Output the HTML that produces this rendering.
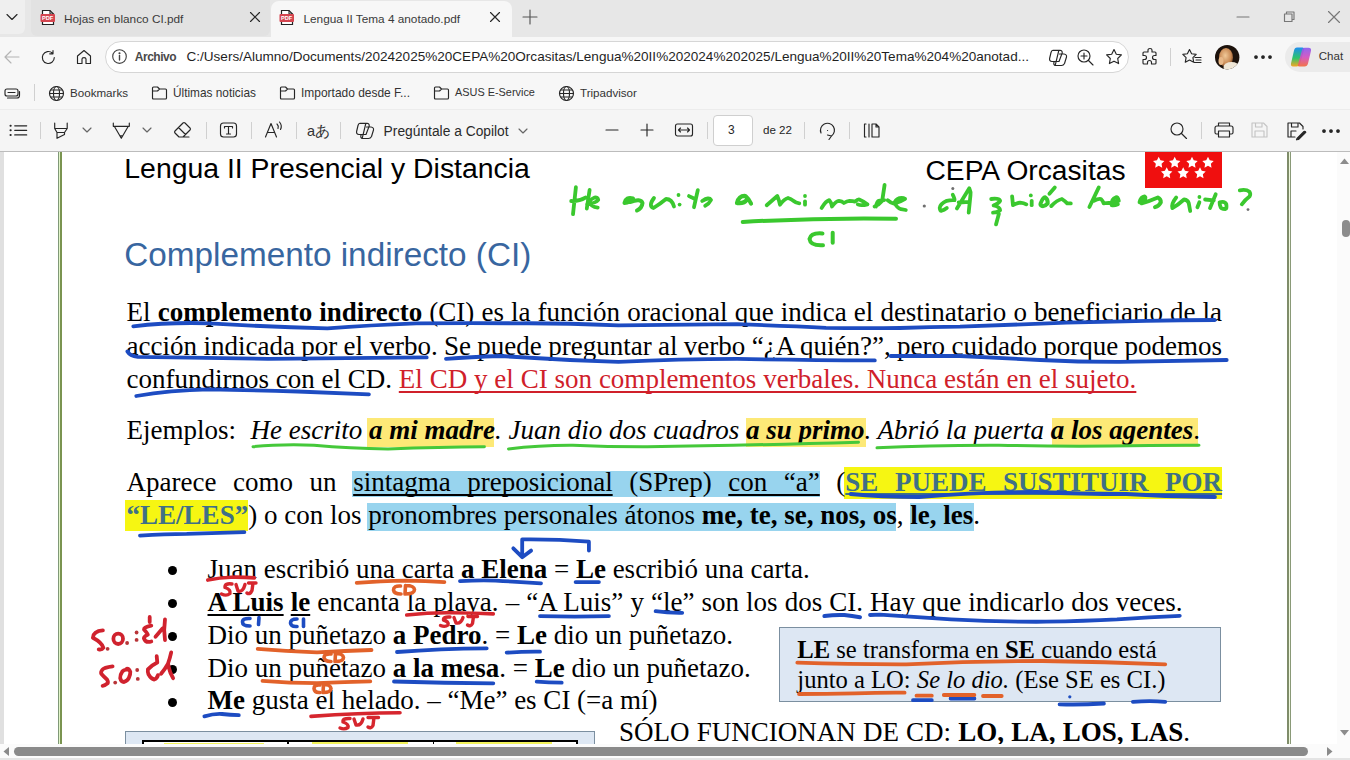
<!DOCTYPE html>
<html><head><meta charset="utf-8">
<style>
*{margin:0;padding:0;box-sizing:border-box}
html,body{width:1350px;height:760px;overflow:hidden;background:#f7f7f7;font-family:"Liberation Sans",sans-serif;position:relative}
.a{position:absolute}
.ui{font-family:"Liberation Sans",sans-serif;color:#1f1f1f;white-space:pre}
.ic{position:absolute;overflow:visible}
.ic *{fill:none;stroke:#262626;stroke-width:1.15;stroke-linecap:round;stroke-linejoin:round}
.sep{position:absolute;width:1px;background:#d0d0d0}
u{text-decoration-skip-ink:none}
.doc{font-family:"Liberation Serif",serif;color:#000;white-space:pre;font-size:27px;line-height:33px}
.j{white-space:normal;text-align:justify;text-align-last:justify}
.cs{font-family:"Liberation Sans",sans-serif;white-space:pre}
</style></head><body>
<!-- TAB STRIP -->
<div class="a" style="left:0;top:0;width:1350px;height:37px;background:#e7e7e7"></div>
<div class="a" style="left:0;top:0;width:25px;height:34px;background:#efefef;border-radius:0 0 6px 0"></div>
<svg class="ic" style="left:4px;top:10px" width="16" height="14"><path d="M3 4.5 L8 9.5 L13 4.5"/></svg>
<div class="a" style="left:31px;top:0;width:239px;height:36px;background:#e2e2e2;border-radius:0 0 6px 6px"></div>
<svg class="a" style="left:40px;top:9px" width="16" height="17" viewBox="0 0 16 17"><path d="M2.5 1.5 H10 L13.5 5 V15.5 H2.5 Z" fill="#fff" stroke="#222" stroke-width="1.2"/><path d="M10 1.5 V5 H13.5" fill="none" stroke="#222" stroke-width="1.1"/><rect x="0.5" y="5" width="14.5" height="8" rx="1" fill="#d4454f"/><text x="7.7" y="11.2" font-size="5.6" font-family="Liberation Sans" font-weight="bold" fill="#fff" text-anchor="middle">PDF</text></svg>
<div class="a ui" style="left:64px;top:11.5px;font-size:11.8px;color:#3a3a3a">Hojas en blanco CI.pdf</div>
<svg class="ic" style="left:248px;top:10px" width="14" height="14"><path d="M2.5 2.5 L11.5 11.5 M11.5 2.5 L2.5 11.5"/></svg>
<div class="a" style="left:271px;top:1px;width:241px;height:36px;background:#f7f7f7;border-radius:8px 8px 0 0"></div>
<svg class="a" style="left:279px;top:9px" width="16" height="17" viewBox="0 0 16 17"><path d="M2.5 1.5 H10 L13.5 5 V15.5 H2.5 Z" fill="#fff" stroke="#222" stroke-width="1.2"/><path d="M10 1.5 V5 H13.5" fill="none" stroke="#222" stroke-width="1.1"/><rect x="0.5" y="5" width="14.5" height="8" rx="1" fill="#d4454f"/><text x="7.7" y="11.2" font-size="5.6" font-family="Liberation Sans" font-weight="bold" fill="#fff" text-anchor="middle">PDF</text></svg>
<div class="a ui" style="left:303.5px;top:11.5px;font-size:11.8px;color:#3a3a3a">Lengua II Tema 4 anotado.pdf</div>
<svg class="ic" style="left:488px;top:10px" width="14" height="14"><path d="M2.5 2.5 L11.5 11.5 M11.5 2.5 L2.5 11.5"/></svg>
<svg class="ic" style="left:521px;top:8px" width="18" height="18"><path d="M9 2 V16 M2 9 H16" style="stroke:#555"/></svg>
<svg class="ic" style="left:1236px;top:10px" width="14" height="14"><path d="M1 7 H13" style="stroke:#777"/></svg>
<svg class="ic" style="left:1282px;top:10px" width="14" height="14"><path d="M2.5 4 H10 V11.5 H2.5 Z M4.5 4 V2 H12 V9.5 H10" style="stroke:#777"/></svg>
<svg class="ic" style="left:1327px;top:10px" width="14" height="14"><path d="M1.5 1.5 L12.5 12.5 M12.5 1.5 L1.5 12.5" style="stroke:#777"/></svg>

<!-- ADDRESS ROW -->
<div class="a" style="left:0;top:37px;width:1350px;height:41px;background:#f7f7f7"></div>
<svg class="ic" style="left:3px;top:49px" width="18" height="16"><path d="M2 8 H16 M2 8 L8 2 M2 8 L8 14" style="stroke:#b4b4b4"/></svg>
<svg class="ic" style="left:40px;top:49px" width="17" height="17"><path d="M14.3 8.5 A6 6 0 1 1 12.3 4 M13 1.5 V4.8 H9.7"/></svg>
<svg class="ic" style="left:75px;top:48px" width="18" height="18"><path d="M2.5 8 L9 2.5 L15.5 8 V15.5 H11 V11 Q11 9.6 9 9.6 Q7 9.6 7 11 V15.5 H2.5 Z"/></svg>
<div class="a" style="left:104.5px;top:40.8px;width:1024.5px;height:31.8px;background:#fff;border:1px solid #d6d6d6;border-radius:16px"></div>
<svg class="ic" style="left:111px;top:48.3px" width="17" height="17"><circle cx="8.5" cy="8.5" r="6.8" style="stroke:#444"/><path d="M8.5 7.5 V12" style="stroke:#444;stroke-width:1.4"/><circle cx="8.5" cy="5.2" r="0.5" style="fill:#444;stroke:#444"/></svg>
<div class="a ui" style="left:134.8px;top:50px;font-size:12px;font-weight:bold;letter-spacing:-0.5px;color:#4a4a4a">Archivo</div>
<div class="a ui" style="left:186.5px;top:48.5px;font-size:13.56px;color:#1f1f1f">C:/Users/Alumno/Documents/20242025%20CEPA%20Orcasitas/Lengua%20II%202024%202025/Lengua%20II%20Tema%204%20anotad...</div>
<svg class="ic" style="left:1048px;top:47px" width="21" height="20"><path d="M5 3.3 L12 3.3 Q14.5 3.5 14.2 6 L11 14.5 L4 14.5 Q1.2 14.3 1.6 11.5 L3 5.5 Q3.5 3.5 5 3.3 Z M11.5 7 L16 7 Q19 7.5 18.5 10 L16.5 16.5 Q15.5 18.5 13.5 18.5 L8 18.5 Q5.5 18.3 5.8 16 L6.2 14.5 M10.8 3.5 L7.2 18.3"/></svg>
<svg class="ic" style="left:1076px;top:48px" width="19" height="19"><circle cx="8" cy="8" r="6"/><path d="M12.5 12.5 L17 17 M8 5 V11 M5 8 H11"/></svg>
<svg class="ic" style="left:1104px;top:47px" width="20" height="20"><path d="M10 2.5 L12.3 7.2 L17.4 7.9 L13.7 11.5 L14.6 16.6 L10 14.2 L5.4 16.6 L6.3 11.5 L2.6 7.9 L7.7 7.2 Z"/></svg>
<svg class="ic" style="left:1140px;top:47px" width="20" height="20"><path d="M8 3 Q8 1.5 10 1.5 Q12 1.5 12 3 V5 H15 Q16 5 16 6 V8.5 H14.5 Q12.5 8.5 12.5 10.5 Q12.5 12.5 14.5 12.5 H16 V16 Q16 17 15 17 H11.5 V15.5 Q11.5 13.5 9.5 13.5 Q7.5 13.5 7.5 15.5 V17 H4 Q3 17 3 16 V12.5 H4.5 Q6.5 12.5 6.5 10.5 Q6.5 8.5 4.5 8.5 H3 V6 Q3 5 4 5 H8 Z"/></svg>
<div class="sep" style="left:1170px;top:48px;height:18px"></div>
<svg class="ic" style="left:1181px;top:47px" width="22" height="20"><path d="M8.5 2.5 L10.6 6.8 L15.2 7.4 L11.9 10.6 L12.7 15.2 L8.5 13 L4.3 15.2 L5.1 10.6 L1.8 7.4 L6.4 6.8 Z M14 10.5 H20 M15 13 H20 M13.5 15.5 H20" /></svg>
<svg class="a" style="left:1215px;top:44.5px" width="25" height="25" viewBox="0 0 25 25"><defs><clipPath id="avc"><circle cx="12.2" cy="12.2" r="12.2"/></clipPath><radialGradient id="avf" cx="0.45" cy="0.4" r="0.6"><stop offset="0" stop-color="#f0c898"/><stop offset="0.7" stop-color="#c98a55"/><stop offset="1" stop-color="#7a4a28"/></radialGradient></defs><g clip-path="url(#avc)"><rect width="25" height="25" fill="#1c120c"/><ellipse cx="11" cy="12.5" rx="7" ry="9.5" fill="url(#avf)"/><ellipse cx="16.5" cy="22" rx="8" ry="5" fill="#efe6d6"/><ellipse cx="6" cy="16" rx="2.5" ry="4" fill="#e8b888"/></g></svg>
<svg class="ic" style="left:1253px;top:50px" width="20" height="14"><circle cx="3" cy="7" r="1.3" style="fill:#262626"/><circle cx="10" cy="7" r="1.3" style="fill:#262626"/><circle cx="17" cy="7" r="1.3" style="fill:#262626"/></svg>
<div class="a" style="left:1285px;top:42px;width:80px;height:30px;background:#ebebeb;border-radius:15px"></div>
<svg class="a" style="left:1289px;top:46px" width="24" height="22" viewBox="0 0 24 22"><defs><linearGradient id="cg1" x1="0" y1="0" x2="0" y2="1"><stop offset="0" stop-color="#1e8ef0"/><stop offset="0.55" stop-color="#2fc46a"/><stop offset="1" stop-color="#f5a623"/></linearGradient><linearGradient id="cg2" x1="0" y1="0" x2="0" y2="1"><stop offset="0" stop-color="#8a5cf0"/><stop offset="0.5" stop-color="#d24fc0"/><stop offset="1" stop-color="#f46a3a"/></linearGradient></defs><path d="M8 1.5 H13.5 Q15.5 1.5 15 4 L11 18 Q10.3 20.5 7.5 20.5 H4 Q1.5 20.5 2 17.5 L5 4.5 Q5.6 1.5 8 1.5 Z" fill="url(#cg1)"/><path d="M15.5 1.8 H19.5 Q22.5 1.8 22 4.8 L19 17.5 Q18.3 20.5 15.5 20.5 H10 Q8.5 20.5 9 18.5 L13 4 Q13.5 1.8 15.5 1.8 Z" fill="url(#cg2)" opacity="0.92"/></svg>
<div class="a ui" style="left:1318.8px;top:50px;font-size:11.5px;color:#333">Chat</div>

<!-- BOOKMARK ROW -->
<div class="a" style="left:0;top:78px;width:1350px;height:31px;background:#f7f7f7"></div>
<svg class="ic" style="left:3px;top:85px" width="18" height="16"><rect x="2" y="4" width="13" height="7" rx="2"/><path d="M4.5 13 H14 Q16.5 13 16.5 10.5 V6.5 M5 7.5 H12"/></svg>
<div class="sep" style="left:34px;top:84px;height:17px"></div>
<svg class="ic" style="left:48px;top:85px" width="17" height="17"><circle cx="8.5" cy="8.5" r="7"/><ellipse cx="8.5" cy="8.5" rx="3" ry="7"/><path d="M1.5 8.5 H15.5 M2.8 5 H14.2 M2.8 12 H14.2"/></svg>
<div class="a ui" style="left:70px;top:86px;font-size:11.6px;color:#333">Bookmarks</div>
<svg class="ic" style="left:151px;top:85px" width="17" height="16"><path d="M1.5 3 Q1.5 2 2.5 2 H6.5 L8.5 4 H14.5 Q15.5 4 15.5 5 V13 Q15.5 14 14.5 14 H2.5 Q1.5 14 1.5 13 Z M1.5 6 H6.5 L8.5 4"/></svg>
<div class="a ui" style="left:173px;top:86px;font-size:11.85px;color:#333">Últimas noticias</div>
<svg class="ic" style="left:279px;top:85px" width="17" height="16"><path d="M1.5 3 Q1.5 2 2.5 2 H6.5 L8.5 4 H14.5 Q15.5 4 15.5 5 V13 Q15.5 14 14.5 14 H2.5 Q1.5 14 1.5 13 Z M1.5 6 H6.5 L8.5 4"/></svg>
<div class="a ui" style="left:301px;top:86px;font-size:11.96px;color:#333">Importado desde F...</div>
<svg class="ic" style="left:433px;top:85px" width="17" height="16"><path d="M1.5 3 Q1.5 2 2.5 2 H6.5 L8.5 4 H14.5 Q15.5 4 15.5 5 V13 Q15.5 14 14.5 14 H2.5 Q1.5 14 1.5 13 Z M1.5 6 H6.5 L8.5 4"/></svg>
<div class="a ui" style="left:455px;top:86px;font-size:10.9px;color:#333">ASUS E-Service</div>
<svg class="ic" style="left:558px;top:85px" width="17" height="17"><circle cx="8.5" cy="8.5" r="7"/><ellipse cx="8.5" cy="8.5" rx="3" ry="7"/><path d="M1.5 8.5 H15.5 M2.8 5 H14.2 M2.8 12 H14.2"/></svg>
<div class="a ui" style="left:580px;top:86px;font-size:11.6px;color:#333">Tripadvisor</div>

<!-- PDF TOOLBAR -->
<div class="a" style="left:0;top:109px;width:1350px;height:1px;background:#ececec"></div>
<div class="a" style="left:0;top:110px;width:1350px;height:41px;background:#f5f5f5"></div>
<div class="a" style="left:0;top:151px;width:1350px;height:1px;background:#bcbcbc"></div>
<svg class="ic" style="left:8px;top:121px" width="20" height="18"><path d="M2.5 4.8 H2.7 M2.5 9.3 H2.7 M2.5 13.9 H2.7" style="stroke-width:2"/><path d="M6.7 4.8 H18.7 M6.7 9.3 H18.7 M6.7 13.9 H18.7"/></svg>
<div class="sep" style="left:40px;top:122px;height:17px"></div>
<svg class="ic" style="left:51px;top:120px" width="20" height="20"><path d="M3.7 3.1 V8.5 H16.2 V3.1 M3.7 8.5 L6 12.5 V18.3 L13.5 14.5 V12.5 L16.2 8.5 M6 12.5 H13.5"/></svg>
<svg class="ic" style="left:81px;top:125px" width="12" height="10"><path d="M2 3 L6 7 L10 3" style="stroke:#666"/></svg>
<svg class="ic" style="left:111px;top:120px" width="20" height="20"><path d="M2.3 3.1 V6.3 H18.3 V3.1 M3.3 6.3 L10.3 18.3 L17.3 6.3 M8.8 15.8 H11.8"/></svg>
<svg class="ic" style="left:141px;top:125px" width="12" height="10"><path d="M2 3 L6 7 L10 3" style="stroke:#666"/></svg>
<svg class="ic" style="left:172px;top:120px" width="22" height="20"><path d="M3 11 L11 3 Q12 2 13 3 L18 8 Q19 9 18 10 L11 17 H7 L3 13 Q2 12 3 11 Z M6.5 7.5 L13.5 14.5 M7 17 H17"/></svg>
<div class="sep" style="left:206px;top:122px;height:17px"></div>
<svg class="ic" style="left:218px;top:120px" width="21" height="20"><rect x="2.5" y="3" width="16" height="14" rx="3"/><path d="M6.5 6.5 H14.5 M6.5 6.5 V8 M14.5 6.5 V8 M10.5 6.5 V14 M8.5 14 H12.5"/></svg>
<div class="sep" style="left:251px;top:122px;height:17px"></div>
<svg class="ic" style="left:263px;top:120px" width="22" height="20"><path d="M2.5 17 L8 3.5 L13.5 17 M4.5 12.5 H11.5 M14 4 Q16 6 15 8.5 M16.5 2 Q19.5 5.5 17.5 9.5"/></svg>
<div class="sep" style="left:296px;top:122px;height:17px"></div>
<div class="a ui" style="left:307px;top:122px;font-size:14.5px;color:#333">aあ</div>
<div class="sep" style="left:340px;top:122px;height:17px"></div>
<svg class="ic" style="left:355px;top:120px" width="21" height="20"><path d="M5 3.3 L12 3.3 Q14.5 3.5 14.2 6 L11 14.5 L4 14.5 Q1.2 14.3 1.6 11.5 L3 5.5 Q3.5 3.5 5 3.3 Z M11.5 7 L16 7 Q19 7.5 18.5 10 L16.5 16.5 Q15.5 18.5 13.5 18.5 L8 18.5 Q5.5 18.3 5.8 16 L6.2 14.5 M10.8 3.5 L7.2 18.3"/></svg>
<div class="a ui" style="left:383.6px;top:123.5px;font-size:13.8px;color:#2a2a2a">Pregúntale a Copilot</div>
<svg class="ic" style="left:517px;top:126px" width="12" height="10"><path d="M2 3 L6 7 L10 3" style="stroke:#666"/></svg>
<svg class="ic" style="left:604px;top:123px" width="16" height="14"><path d="M2 7 H14"/></svg>
<svg class="ic" style="left:639px;top:122px" width="16" height="16"><path d="M2 8 H14 M8 2 V14"/></svg>
<svg class="ic" style="left:674px;top:122px" width="21" height="16"><rect x="1.5" y="2" width="17" height="12" rx="2"/><path d="M4.5 8 H15.5 M4.5 8 L6.5 6 M4.5 8 L6.5 10 M15.5 8 L13.5 6 M15.5 8 L13.5 10"/></svg>
<div class="sep" style="left:707px;top:122px;height:17px"></div>
<div class="a" style="left:713px;top:115px;width:40px;height:31px;background:#fff;border:1px solid #cfcfcf;border-radius:4px"></div>
<div class="a ui" style="left:728px;top:123px;font-size:12px;color:#262626">3</div>
<div class="a ui" style="left:763px;top:123px;font-size:11.6px;color:#262626">de 22</div>
<div class="sep" style="left:804px;top:122px;height:17px"></div>
<svg class="ic" style="left:817px;top:120px" width="21" height="21"><path d="M4 13 A7 7 0 1 1 14.5 16 M14.5 16 L12 19.5 M14.5 16 L10.5 15 M10.5 10.5 H10.6"/></svg>
<div class="sep" style="left:849px;top:122px;height:17px"></div>
<svg class="ic" style="left:862px;top:121px" width="20" height="19"><path d="M2.5 3 H4 M2.5 16 H4 M2.5 3 V16 M7 3 V16 M10 3 H14 L17 6 V16 H10 Z M14 3 V6 H17" style="stroke-dasharray:none"/></svg>
<svg class="ic" style="left:1169px;top:121px" width="20" height="20"><circle cx="8" cy="8" r="6"/><path d="M12.5 12.5 L17.5 17.5"/></svg>
<div class="sep" style="left:1201px;top:122px;height:17px"></div>
<svg class="ic" style="left:1213px;top:120px" width="22" height="20"><path d="M5.5 6 V3 H16.5 V6 M5.5 14 H3.5 Q2 14 2 12.5 V8 Q2 6 4 6 H18 Q20 6 20 8 V12.5 Q20 14 18.5 14 H16.5 M5.5 11 H16.5 V17 H5.5 Z"/></svg>
<svg class="ic" style="left:1249px;top:120px" width="21" height="20"><path d="M3 3 H14.5 L18 6.5 V17 H3 Z M6.5 3 V7 H13 V3 M6 17 V11 H15 V17" style="stroke:#c4c4c4"/></svg>
<svg class="ic" style="left:1285px;top:120px" width="22" height="21"><path d="M10 17 H3 V3 H14.5 L18 6.5 V9 M6.5 3 V7 H13 V3 M6 17 V11 H11" /><path d="M12 18.5 L19 11.5 Q20.5 11 20.8 12.3 L13.5 19.5 L11.5 19.8 Z" style="fill:#262626"/></svg>
<svg class="ic" style="left:1321px;top:124px" width="20" height="14"><circle cx="3" cy="7" r="1.3" style="fill:#262626"/><circle cx="10" cy="7" r="1.3" style="fill:#262626"/><circle cx="17" cy="7" r="1.3" style="fill:#262626"/></svg>

<!-- DOC VIEWPORT -->
<div class="a" id="vp" style="left:0;top:152px;width:1350px;height:592px;background:#fff;overflow:hidden">
<div class="a" style="left:0;top:-152px;width:1350px;height:900px">
<!-- left gray strip -->
<div class="a" style="left:0;top:152px;width:4px;height:600px;background:#e0e0e0"></div>
<!-- page borders -->
<div class="a" style="left:58px;top:152px;width:1px;height:600px;background:#809878"></div>
<div class="a" style="left:59px;top:152px;width:1px;height:600px;background:#e2f5c8"></div>
<div class="a" style="left:60px;top:152px;width:2px;height:600px;background:#7a9450"></div>
<div class="a" style="left:1287px;top:152px;width:2px;height:600px;background:#7f8c6a"></div>
<div class="a" style="left:1289px;top:152px;width:1px;height:600px;background:#eef8dc"></div>
<div class="a" style="left:1290px;top:152px;width:1px;height:600px;background:#8a9a78"></div>
<!-- right v scrollbar -->
<div class="a" style="left:1337px;top:152px;width:13px;height:600px;background:#fbfbfb"></div>
<div class="a" style="left:1342px;top:220px;width:8px;height:17px;background:#8c8c8c;border-radius:4px"></div>
<svg class="a" style="left:1339px;top:157px" width="11" height="8"><path d="M1 7 L5.5 1.5 L10 7 Z" fill="#8c8c8c"/></svg>
<svg class="a" style="left:1339px;top:729px" width="11" height="8"><path d="M1 1 L5.5 6.5 L10 1 Z" fill="#8c8c8c"/></svg>

<!-- header -->
<div class="a cs" style="left:124.3px;top:151px;font-size:28.4px;line-height:34px;color:#000">Lengua II Presencial y Distancia</div>
<div class="a cs" style="left:925.5px;top:152.5px;font-size:28.2px;line-height:34px;color:#000">CEPA Orcasitas</div>
<div class="a" style="left:1145px;top:152px;width:77px;height:36px;background:#f00f0f"></div>
<svg class="a" style="left:1145px;top:152px" width="77" height="36" viewBox="0 0 77 36">
<g fill="#fff">
<path id="st" d="M0 -6 L1.76 -2.43 L5.7 -1.85 L2.85 0.93 L3.53 4.85 L0 3 L-3.53 4.85 L-2.85 0.93 L-5.7 -1.85 L-1.76 -2.43 Z" transform="translate(13.7 10.8)"/>
<use href="#st" x="16" y="0"/><use href="#st" x="33.3" y="0"/><use href="#st" x="49.3" y="0"/>
<use href="#st" x="8" y="10.5"/><use href="#st" x="24.5" y="10.5"/><use href="#st" x="41.3" y="10.5"/>
</g></svg>
<div class="a cs" style="left:124.2px;top:235px;font-size:33.3px;line-height:40px;color:#3866a0">Complemento indirecto (CI)</div>

<!-- paragraph 1 -->
<div class="a doc j" style="left:126.6px;top:296px;width:1095.5px"><span>El <b>complemento indirecto</b> (CI) es la función oracional que indica el destinatario o beneficiario de la</span></div>
<div class="a doc j" style="left:126.6px;top:329.7px;width:1095.5px;word-spacing:-2px"><span>acción indicada por el verbo. Se puede preguntar al verbo “¿A quién?”, pero cuidado porque podemos</span></div>
<div class="a doc" style="left:126.6px;top:362.8px">confundirnos con el CD. <span style="color:#d0202a;text-decoration:underline;text-decoration-thickness:1.6px;text-underline-offset:3px;text-decoration-skip-ink:none;word-spacing:0.1px">El CD y el CI son complementos verbales. Nunca están en el sujeto.</span></div>

<!-- highlights -->
<div class="a" style="left:367px;top:418px;width:127px;height:28.5px;background:#fde977"></div>
<div class="a" style="left:746px;top:418px;width:120px;height:28.5px;background:#fde977"></div>
<div class="a" style="left:1052px;top:418px;width:146px;height:28.5px;background:#fde977"></div>
<div class="a doc" style="left:126.6px;top:413.5px">Ejemplos: <span style="display:inline-block;width:7.7px"></span><i>He escrito <b>a mi madre</b>. Juan dio dos cuadros <b>a su primo</b>. Abrió la puerta <b>a los agentes</b></i>.</div>

<div class="a" style="left:352.4px;top:470.8px;width:467.6px;height:26.5px;background:#98d4ee"></div>
<div class="a" style="left:844.4px;top:467px;width:378px;height:32px;background:#f6f612"></div>
<div class="a" style="left:124.8px;top:500.4px;width:123px;height:30.6px;background:#f6f612"></div>
<div class="a" style="left:367.2px;top:502.8px;width:528.8px;height:28.2px;background:#98d4ee"></div>
<div class="a" style="left:910px;top:502.8px;width:64px;height:28.2px;background:#98d4ee"></div>
<div class="a doc j" style="left:126.6px;top:466px;width:1095.5px"><span>Aparece como un <u style="text-underline-offset:3px">sintagma preposicional</u> (SPrep) <u style="text-underline-offset:3px">con “a”</u>  (<b style="color:#3f7087;text-decoration:underline;text-decoration-skip-ink:none;text-underline-offset:2px;text-decoration-thickness:1.5px">SE PUEDE SUSTITUIR POR</b></span></div>
<div class="a doc" style="left:126.6px;top:498.5px"><b style="color:#3f7087">“LE/LES”</b>) o con los pronombres personales átonos <b>me, te, se, nos, os</b>, <b>le, les</b>.</div>

<!-- bullets -->
<div class="a" style="left:167.8px;top:565.8px;width:9.2px;height:9.2px;border-radius:50%;background:#000"></div>
<div class="a" style="left:167.8px;top:598.8px;width:9.2px;height:9.2px;border-radius:50%;background:#000"></div>
<div class="a" style="left:167.8px;top:631.8px;width:9.2px;height:9.2px;border-radius:50%;background:#000"></div>
<div class="a" style="left:167.8px;top:664.8px;width:9.2px;height:9.2px;border-radius:50%;background:#000"></div>
<div class="a" style="left:167.8px;top:697.8px;width:9.2px;height:9.2px;border-radius:50%;background:#000"></div>
<div class="a doc" style="left:207.5px;top:552.9px">Juan escribió una carta <b>a Elena</b> = <b>Le</b> escribió una carta.</div>
<div class="a doc" style="left:207.5px;top:585.6px;word-spacing:0.33px"><b><u style="text-underline-offset:3px">A Luis</u></b> <b><u style="text-underline-offset:3px">le</u></b> encanta la playa. – “A Luis” y “le” son los dos CI. Hay que indicarlo dos veces.</div>
<div class="a doc" style="left:207.5px;top:618.7px">Dio un puñetazo <b>a Pedro</b>. = <b>Le</b> dio un puñetazo.</div>
<div class="a doc" style="left:207.5px;top:651.9px">Dio un puñetazo <b>a la mesa</b>. = <b>Le</b> dio un puñetazo.</div>
<div class="a doc" style="left:207.5px;top:684.3px"><b>Me</b> gusta el helado. – “Me” es CI (=a mí)</div>

<!-- box -->
<div class="a" style="left:779px;top:627px;width:442px;height:75px;background:#dde7f3;border:1px solid #7b8fa0"></div>
<div class="a doc" style="left:797.3px;top:632.6px;font-size:24.6px"><b>LE</b> se transforma en <b>SE</b> cuando está</div>
<div class="a doc" style="left:797.3px;top:663.3px;font-size:24.6px">junto a LO: <i>Se lo dio.</i> (Ese SE es CI.)</div>

<!-- bottom -->
<div class="a doc" style="left:619px;top:716px;word-spacing:0.45px">SÓLO FUNCIONAN DE CD: <b>LO, LA, LOS, LAS</b>.</div>
<div class="a" style="left:125px;top:731px;width:470px;height:40px;background:#dde7f3;border:1px solid #7b8fa0"></div>
<div class="a" style="left:142px;top:740px;width:436px;height:30px;border:2px solid #000;background:#fff"></div>
<div class="a" style="left:287px;top:740px;width:1.5px;height:30px;background:#000"></div>
<div class="a" style="left:432.5px;top:740px;width:1.5px;height:30px;background:#000"></div>
<div class="a" style="left:163.9px;top:742.5px;width:100px;height:10px;background:#f2f25a"></div>
<div class="a" style="left:311.9px;top:742px;width:96px;height:10px;background:#f2f25a"></div>
<div class="a" style="left:456.3px;top:742px;width:96px;height:10px;background:#f2f25a"></div>
<!-- ANN -->
<svg class="a" style="left:0;top:0" width="1350" height="760" viewBox="0 0 1350 760">
<g fill="none" stroke-linecap="round" stroke-linejoin="round">
<!-- GREEN handwriting -->
<g stroke="#3ac82e" stroke-width="3.8">
<path d="M575.9 187.2 L573 214.2 M571.2 201 Q579 201.5 585.4 197.6 M589.6 190 L586.8 208.5"/>
<path d="M587.3 204.3 Q596 203 598.2 200 Q598 197 594.4 197.6 Q589.6 200 589.6 202 Q591 207 597.7 207.6"/>
<path d="M624.5 203 Q626 196.5 633 198.5 Q630 203 624.5 203 M630 202 Q641 198 642.5 203 Q642 208 637 210.5" stroke-width="4"/>
<path d="M654 198 Q648 206 653.5 208 Q660 204 666 199 Q672 199 674 206.5"/>
<path d="M697.8 190.2 L694 207.2 M689 196.1 L695 199"/>
<path d="M702.2 201 Q709 196.5 711 200 Q709 204 705.2 205.7"/>
<path d="M737 203 Q739 195.5 745.5 196 Q749 199 751 203.5 M737 203 Q744 204 747 199.5" stroke-width="4.2"/>
<path d="M766.7 205.3 L777.3 196 Q779 200 780 204.7 Q784 199 788 198 Q791 199 793.3 200.7 Q796 203 799.3 203.3"/>
<path d="M805 201.3 L805 204.7"/>
<path d="M821.6 207.9 Q826 201 829.2 200.2 Q831 202 832 206.5 Q836 201 839 200.9 Q842 201 843.9 203 Q847 201 849.4 200.9 Q853 201 855 201.6 Q858 199 859.2 199.5 Q865 202 867.5 204.4 Q861 206 857.8 204.4"/>
<path d="M875.9 206.5 Q877 201.5 878.7 200.9 Q882 200 884.2 200.2 M884.6 184.9 L882.2 200.9 Q879 205 874.5 206.5"/>
<path d="M887.7 200.2 Q891 203 894 203.7 Q900 202 905.1 198.8 Q903 197.5 899.6 198.1 Q895 200 894.7 203 Q897 208 901 209.2 L905.8 210"/>
<path d="M952.8 194.8 Q955 199 954.5 200.2 Q950 200 946.8 200.8 Q940 204 939.7 207.9 Q940 211 941.5 210.8 Q944 210 946.8 207.9"/>
<path d="M956.9 208.4 L969.3 188.3 Q971 192 970.5 194.8 L968.7 212.6 M958.7 202.5 L969.3 201.9"/>
<path d="M991.2 199 Q999 198 1000.1 200.8 Q999 203 993.6 205.5 Q1000 207 1000.1 210.2 Q997 212.5 993 212.6 M998.9 213.8 L996 224.4"/>
<path d="M1012.1 196.3 L1013 205.2 Q1017 203 1020.1 202.6 Q1024 203 1026.3 204.3"/>
<path d="M1031.7 200.8 L1031.7 205.2"/>
<path d="M1040.6 203.4 Q1043 197 1045 197.2 Q1048 199 1047.7 203.4 Q1045 206.5 1042.3 206.1 Q1040 205 1040.6 203.4" stroke-width="4"/>
<path d="M1049.4 193.7 L1054.8 187.4"/>
<path d="M1051.2 206.1 Q1057 200 1061.9 199 Q1065 201 1067.2 203.4 L1070.8 203.4"/>
<path d="M1098.8 187.4 L1089.4 207 M1093.9 200.8 Q1098 198.5 1101 199 Q1103 201 1103.7 203.4 Q1112 203 1118.8 200.8 Q1118 197 1116.1 197.2 Q1111 199 1111.7 205.2 Q1114 206 1117.9 204.3"/>
<path d="M1139.6 202.3 Q1141 197 1144.5 196.6 Q1147 198 1141.6 203.3 Q1150 201 1157.9 197.5 Q1161 199 1160.8 202.3 Q1159 206 1155 207.2" stroke-width="4"/>
<path d="M1176.2 197.5 Q1171 204 1172.4 208.1 Q1178 205 1184 199.5 Q1188 200 1188.8 203.3 L1190.2 211"/>
<path d="M1199.4 202.3 L1197.4 207.2"/>
<path d="M1215.7 194.2 L1210 208.1 M1205.1 199.5 L1213.8 200.4"/>
<path d="M1219.6 202.3 Q1225 201 1226.3 204.3 Q1227 209 1225.4 209.1 Q1221 209 1220.6 207.2 Q1219.5 204 1219.6 202.3"/>
<path d="M1239.8 190.3 Q1246 189 1249.5 191.7 Q1251 194 1249.5 196.6 Q1245 200 1241.8 204.3"/>
</g>
<g fill="#3ac82e" stroke="none"><circle cx="678.5" cy="195" r="1.9"/><circle cx="679.6" cy="204.6" r="1.9"/><circle cx="805" cy="196" r="1.9"/><circle cx="1030.8" cy="195.4" r="1.9"/><circle cx="1199.4" cy="197" r="1.9"/></g>
<g stroke="#3ac82e" stroke-width="4">
<path d="M742.7 222 Q820 217.5 896 218.7"/>
<path d="M822.5 233.5 Q811 232.5 809.5 239 Q810.5 246 823 245.3"/>
<path d="M832.7 232.7 L832.7 242.7"/>
</g>
<g fill="#6f6f6f" stroke="none"><circle cx="924.3" cy="206" r="1.6"/><circle cx="952.8" cy="188.6" r="1.5"/><circle cx="1248" cy="209.6" r="1.4"/></g>
<!-- green underlines in Ejemplos -->
<g stroke="#45c83a" stroke-width="3">
<path d="M253 446.7 Q280 444 314 445.2 Q350 448.5 388 448.9 Q440 447 484.4 446.7"/>
<path d="M508.5 448.9 Q540 445 573 445.2 Q610 446.8 647.4 446.7 Q740 445.5 858.5 442.2"/>
<path d="M877 447.8 Q930 445 999 445.2 Q1055 446.5 1110 446 Q1160 445 1199 445.2"/>
</g>
<!-- BLUE marker underlines -->
<g stroke="#1d4cc2" stroke-width="3.8">
<path d="M133.3 326.3 Q170 322 208.9 323.3 Q270 327 327.4 328.4 Q370 325 416.3 323.3 Q470 323 520 323.3 Q560 323 618.5 325.4 Q680 325 737 324.2 Q790 326 826 327.8 Q860 328.5 900 328 Q930 327 960 326.7 Q1010 325 1066.7 322.7 Q1110 321.5 1146.7 320.8 Q1180 320 1214.7 320"/>
<path d="M127.4 351.5 Q130 356 137.8 356.8 Q200 358 268 358.9 Q350 358 426.7 357.4"/>
<path d="M446 358.9 Q470 357 500 356 Q560 360 618.5 361.9 Q680 359 737 358.9 Q800 360 874.8 360.4"/>
<path d="M890.7 356 Q925 356 960 356 Q1000 358 1040 360 Q1080 362 1120 361.9 Q1170 361 1226.7 360"/>
<path d="M136.3 396 Q170 390 208.9 389.4 Q250 390 297.8 391.5 Q335 393 368.9 394.4"/>
<path d="M850.7 494 Q880 497 919 497 Q980 492 1037.4 492 Q1080 494 1126.3 494 Q1170 497 1215 497"/>
<path d="M140 535.7 Q165 534 186.7 533.9 Q215 533 244.4 532.1"/>
<path d="M460 581.2 Q478 580 495.6 580.6 Q520 582 541 583.4"/>
<path d="M575.6 582.1 L598.9 582.1"/>
<path d="M588.9 550.6 L588.9 541.7 Q555 539 522.2 539.4 L522.2 556.1 M513.3 548.3 L522.2 557.2 L531.1 550.6"/>
<path d="M540 616.1 Q575 617 608.9 616.1"/>
<path d="M655.6 611.2 Q668 613 682.2 612.8"/>
<path d="M824.4 616.1 Q835 614.5 844.4 615 Q852 616 860 617.2" stroke-width="4"/>
<path d="M870 615 Q880 614.6 880 614.6 Q915 617 951 619.4 Q1000 622 1046 621.7 Q1085 621 1117 619.4 Q1150 617 1179.8 615.8"/>
<path d="M397 652 Q440 648.5 486.7 648.3"/>
<path d="M506.7 652.7 Q523 651.5 540 651.7"/>
<path d="M394 681.5 Q445 683 493.3 683.3"/>
<path d="M536.7 681.7 Q549 682.5 561.7 682.7"/>
<path d="M204.4 716.4 Q214 713.5 222 714 Q230 715 238.8 715.2"/>
<path d="M913 700.2 L931.8 700.2 M950.6 698.5 L974.4 698.5"/>
<path d="M1059.6 704.3 Q1080 705 1103.9 703.5"/>
<path d="M1132.9 701.9 Q1150 700.5 1165.2 701.9"/>
</g>
<g stroke="#1d4cc2" stroke-width="3.6">
<path d="M250 618.5 Q242.5 618 242.5 622 Q242.5 626 250 626"/><path d="M259 617.5 L258.5 624.5"/>
<path d="M297 619 Q290.5 619 290.5 623 Q291 627 297 626.5"/><path d="M303.5 619 L303.5 626.5"/>
</g>
<circle cx="1069.8" cy="696.8" r="1.6" fill="#1f4fc0"/>
<!-- ORANGE -->
<g stroke="#e2622a" stroke-width="3.8">
<path d="M356.7 582.8 Q380 581 406.7 580.6 Q425 581 444.4 582.1"/>
<path d="M257.7 648.8 Q285 651 317 652.4 Q345 651 371.5 650"/>
<path d="M262.5 680.8 Q290 683 317 683.2 Q345 682 370.3 681.3"/>
<path d="M797.3 662.7 Q850 664.5 906.3 664.4 Q975 661 1042.6 661 Q1105 662 1165.2 664.4"/>
<path d="M799 694 Q825 694 855 693.4 Q880 692.5 904.6 692.7"/>
<path d="M916.5 695.7 L931.8 695.7 M943.8 695 L974.4 695 M983 696 L1001.7 696"/>
</g>
<g stroke="#e2622a" stroke-width="3.6">
<path d="M400.5 586 Q393.5 585.5 393.5 590 Q394 594 401 594"/><path d="M405.5 585.5 L405 594 Q414.5 594 414.5 589.5 Q414 585.5 405.5 585.5"/>
<path d="M331 654 Q324 653.5 324 657.5 Q324.5 661.5 331 661.5"/><path d="M335.5 653.5 L335 661.5 Q343.5 661.5 343.5 657.5 Q343 653.5 335.5 653.5"/>
<path d="M320 685 Q314 684.5 314 688.5 Q314.5 693 320 692.5"/><path d="M323.5 684.5 L323 692.5 Q331 692.5 331 688.5 Q330.5 684.5 323.5 684.5"/>
</g>
<!-- RED -->
<g stroke="#d6262e" stroke-width="3.6">
<path d="M207.8 580.1 Q220 577.5 231 577.2 Q243 577 254.4 577.9"/>
<path d="M406.7 615 Q430 612.5 451 612.8 Q473 613 493.3 613.9"/>
<path d="M311 716.4 Q360 713 400 712.8"/>
</g>
<g stroke="#d6262e" stroke-width="3.4">
<path d="M232 584 Q224.5 583 225 587.5 Q231 589.5 230 593.5 Q226.5 596.5 221.5 594"/><path d="M236 584.5 L238 591 Q243 592.5 245 584.5"/><path d="M248.5 583 L256 583 M253 583 L252 590.5 Q250 595 247 593"/>
<path d="M450 617 Q443 616.5 443.5 620 Q449 621.5 448 625 Q445 627.5 440.5 625.5"/><path d="M454 617.5 L456 623 Q461 624 463 617.5"/><path d="M468 616.5 L477.5 616.5 M473.5 616.5 L472.5 623.5 Q470.5 627 467.5 625"/>
<path d="M350 718.5 Q342.5 718 343 722 Q349 724 348 727.5 Q344.5 730 340 728"/><path d="M354 719 L356 725 Q361 726 363 719"/><path d="M368 717.5 L378.5 717.5 M374 717.5 L373 725.5 Q371 729 368 727"/>
</g>
<g stroke="#d0222e" stroke-width="3.8">
<path d="M102.9 630.4 Q93.4 631 92.9 637.8 Q101.8 642.5 103.4 647.8 Q102 650 98.7 649.4"/>
<ellipse cx="118.2" cy="638.8" rx="4.8" ry="5.2"/>
<path d="M151.3 625.7 Q143.9 627 144 629.4 Q148.2 634.1 148 634.5 Q143.9 636.5 143.9 638.3 Q145.5 643.1 151.3 641.5"/><path d="M149.7 617 L149.7 622"/>
<path d="M165 619.4 Q163.4 629.9 165 640 M155.5 636.7 L162.5 628.5"/>
<path d="M112.6 666.3 Q104 667.5 102.6 669.4 Q100.5 672 101.3 673.8 Q104 677 107 679.5 Q108.5 682 107.6 683.3 Q105 685.5 102.6 685.8"/>
<path d="M127.7 669.4 Q123 670 122.1 671.9 Q120 675 120.2 678.2 Q121 682 124 682 Q128 680.5 129 677.6 Q130.5 674 130.3 671.9 Q129 668.5 126.5 668.8"/>
<path d="M156.7 656.2 L157.3 662.5 Q152 665 147.9 669.4 Q147.5 672 148.5 674.4 Q151 679 154.2 679.5 Q157 678.5 158 675.1"/>
<path d="M171.2 652.4 Q170 658 168 663.7 Q165 669 161.1 673.8 M168 663.7 Q169 669 170.6 673.2 L173.1 678.2"/>
</g>
<g fill="#b83438" stroke="none" transform="translate(0 0)"><circle cx="107.6" cy="648.8" r="1.9"/><circle cx="127.1" cy="643" r="1.9"/><circle cx="136.6" cy="632.5" r="1.9"/><circle cx="136.6" cy="639.9" r="1.9"/><circle cx="115.2" cy="682.6" r="1.9"/><circle cx="137.2" cy="670" r="1.9"/><circle cx="137.8" cy="678.9" r="1.9"/></g>
</g>
</svg>
<!-- /ANN -->
</div>
</div>

<!-- H SCROLLBAR -->
<div class="a" style="left:0;top:744px;width:1350px;height:14px;background:#fbfbfb"></div>
<div class="a" style="left:0;top:758px;width:1350px;height:2px;background:#e4e4e4"></div>
<div class="a" style="left:14px;top:747px;width:1294px;height:9px;background:#8a8a8a;border-radius:4.5px"></div>
<svg class="a" style="left:2px;top:746px" width="9" height="11"><path d="M7 1 L1.5 5.5 L7 10 Z" fill="#8a8a8a"/></svg>
<svg class="a" style="left:1325px;top:746px" width="9" height="11"><path d="M2 1 L7.5 5.5 L2 10 Z" fill="#8a8a8a"/></svg>
</body></html>
